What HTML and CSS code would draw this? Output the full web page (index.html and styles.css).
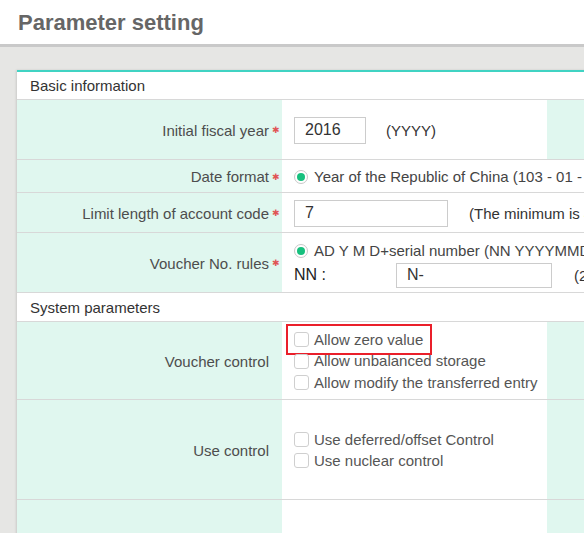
FILE: index.html
```html
<!DOCTYPE html>
<html lang="en">
<head>
<meta charset="utf-8">
<title>Parameter setting</title>
<link rel="stylesheet" href="styles.css">
</head>
<body>
<header class="page-head">
  <h1 class="page-title">Parameter setting</h1>
</header>
<main class="page-body">
  <section class="card">
    <div class="section-title">Basic information</div>

    <div class="row row-fiscal">
      <div class="label">Initial fiscal year<span class="req">✱</span></div>
      <div class="value">
        <span class="input input-year">2016</span>
        <span class="hint">(YYYY)</span>
      </div>
      <div class="label"></div>
      <div class="value"></div>
    </div>

    <div class="row row-date">
      <div class="label">Date format<span class="req">✱</span></div>
      <div class="value wide">
        <span class="radio checked"></span>
        <span class="opt-text">Year of the Republic of China (103 - 01 - 01)</span>
      </div>
    </div>

    <div class="row row-limit">
      <div class="label">Limit length of account code<span class="req">✱</span></div>
      <div class="value wide">
        <span class="input input-limit">7</span>
        <span class="hint">(The minimum is 4)</span>
      </div>
    </div>

    <div class="row row-voucher">
      <div class="label">Voucher No. rules<span class="req">✱</span></div>
      <div class="value wide stack">
        <div class="line">
          <span class="radio checked"></span>
          <span class="opt-text">AD Y M D+serial number (NN YYYYMMDD0001)</span>
        </div>
        <div class="line">
          <span class="nn-label">NN :</span>
          <span class="input input-nn">N-</span>
          <span class="hint">(2 characters)</span>
        </div>
      </div>
    </div>

    <div class="section-title sys">System parameters</div>

    <div class="row row-vctrl">
      <div class="label">Voucher control</div>
      <div class="value checks">
        <label class="check highlighted"><span class="box"></span>Allow zero value<span class="annot"></span></label>
        <label class="check"><span class="box"></span>Allow unbalanced storage</label>
        <label class="check"><span class="box"></span>Allow modify the transferred entry</label>
      </div>
      <div class="label"></div>
      <div class="value"></div>
    </div>

    <div class="row row-uctrl">
      <div class="label">Use control</div>
      <div class="value checks">
        <label class="check"><span class="box"></span>Use deferred/offset Control</label>
        <label class="check"><span class="box"></span>Use nuclear control</label>
      </div>
      <div class="label"></div>
      <div class="value"></div>
    </div>

    <div class="row row-last">
      <div class="label"></div>
      <div class="value"></div>
      <div class="label"></div>
      <div class="value"></div>
    </div>
  </section>
</main>
</body>
</html>
```
FILE: styles.css
```css
html, body {
  margin: 0;
  padding: 0;
  overflow: hidden;
  height: 100%;
}
body {
  background: #e6e6e4;
  font-family: "Liberation Sans", Arial, sans-serif;
  font-size: 15px;
  color: #333;
}
.page-head {
  background: #fff;
  height: 44px;
  border-bottom: 3px solid #c9c9c9;
  padding-left: 18px;
}
.page-title {
  margin: 0;
  padding-top: 2px;
  font-size: 22px;
  font-weight: bold;
  color: #666;
  line-height: 42px;
}
.page-body {
  padding: 23px 0 0 17px;
}
.card {
  width: 1100px;
  background: #fff;
  border-top: 2px solid #40d3c3;
  box-shadow: -1px 0 2px rgba(0, 0, 0, 0.12);
  white-space: nowrap;
}
.section-title {
  height: 28px;
  box-sizing: border-box;
  border-bottom: 1px solid #d8d8d8;
  padding-left: 13px;
  line-height: 28px;
  font-size: 15px;
  color: #333;
}
.section-title.sys {
  height: 29px;
  line-height: 29px;
}
.row {
  display: grid;
  grid-template-columns: 265px 265px 265px 1fr;
  box-sizing: border-box;
  border-bottom: 1px solid #d8d8d8;
}
.row-fiscal { height: 60px; }
.row-date { height: 33px; }
.row-limit { height: 40px; }
.row-voucher { height: 60px; }
.row-vctrl { height: 78px; }
.row-uctrl { height: 100px; }
.row-last { height: 60px; }

.label {
  background: #e0f7ef;
  color: #4d4d4d;
  text-align: right;
  padding-right: 13px;
  padding-top: 1px;
  display: flex;
  align-items: center;
  justify-content: flex-end;
}
.req {
  color: #e05555;
  font-family: "DejaVu Sans", sans-serif;
  font-size: 9px;
  width: 11px;
  margin-right: -11px;
  padding-left: 3px;
  box-sizing: border-box;
  text-align: left;
}
.value {
  padding-left: 12px;
  padding-top: 1px;
  display: flex;
  align-items: center;
  color: #333;
}
.value.wide {
  grid-column: 2 / -1;
}
.value.stack {
  flex-direction: column;
  align-items: flex-start;
  justify-content: center;
  padding-top: 2px;
}
.line {
  display: flex;
  align-items: center;
}
.line + .line {
  margin-top: 1px;
}
.input {
  box-sizing: border-box;
  border: 1px solid #cccccc;
  background: #fff;
  padding-left: 10px;
  display: inline-flex;
  align-items: center;
  color: #333;
  font-size: 16px;
}
.input-year {
  width: 72px;
  height: 27px;
}
.input-limit {
  width: 154px;
  height: 27px;
}
.input-nn {
  width: 156px;
  height: 25px;
}
.hint {
  margin-left: 20px;
  color: #333;
}
.input-limit + .hint { margin-left: 21px; }
.input-nn + .hint { margin-left: 22px; }
.nn-label {
  width: 102px;
  color: #222;
  font-size: 16px;
}
.radio {
  width: 14px;
  height: 14px;
  box-sizing: border-box;
  border: 1px solid #c8c8c8;
  border-radius: 50%;
  background: #fff;
  display: inline-flex;
  align-items: center;
  justify-content: center;
  margin-right: 6px;
  flex-shrink: 0;
}
.radio.checked::after {
  content: "";
  width: 8px;
  height: 8px;
  border-radius: 50%;
  background: #17c07e;
}
.opt-text {
  color: #444;
  line-height: 20px;
}
.row-voucher .line:first-child {
  height: 22px;
}
.checks {
  flex-direction: column;
  align-items: flex-start;
  justify-content: center;
}
.check {
  position: relative;
  display: flex;
  align-items: center;
  line-height: 21.5px;
  color: #555;
}
.box {
  width: 15px;
  height: 15px;
  box-sizing: border-box;
  border: 1px solid #cfcfcf;
  border-radius: 3px;
  background: #fff;
  margin-right: 5px;
}
.annot {
  position: absolute;
  left: -8px;
  top: -5px;
  width: 146px;
  height: 31px;
  box-sizing: border-box;
  border: 2px solid #ea1f2a;
}
```
